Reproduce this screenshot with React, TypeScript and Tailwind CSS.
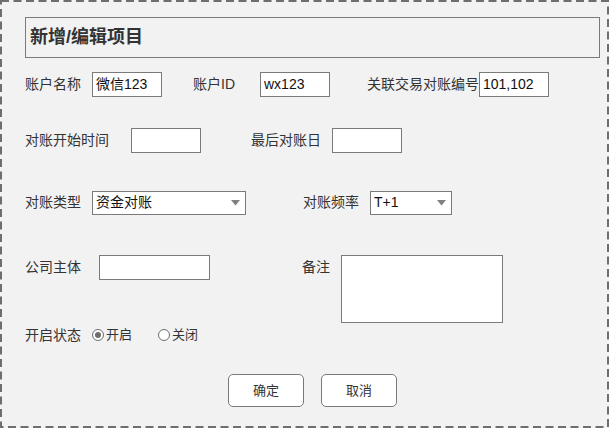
import React from "react";

const font = { fontFamily: "'Liberation Sans', 'Noto Sans CJK SC', sans-serif" };

function Box({ w, h = "h-[25px]", children }: { w: string; h?: string; children?: React.ReactNode }) {
  return (
    <div className={`${w} ${h} shrink-0 border border-[#7a7a7a] bg-white flex items-center pl-[3px] text-[14px] text-[#111]`}>
      {children}
    </div>
  );
}

function Label({ w, ml = "", children }: { w: string; ml?: string; children: React.ReactNode }) {
  return (
    <div className={`${w} ${ml} h-[25px] shrink-0 flex items-center text-[14px] text-[#333] whitespace-nowrap`}>
      {children}
    </div>
  );
}

function Select({ w, value }: { w: string; value: string }) {
  return (
    <div className={`${w} h-[24px] shrink-0 border border-[#7a7a7a] bg-white flex items-center justify-between pl-[3px] pr-[5px] text-[14px] text-[#111]`}>
      <span>{value}</span>
      <svg width="9" height="6" viewBox="0 0 9 6">
        <polygon points="0,0 9,0 4.5,5.5" fill="#808080" />
      </svg>
    </div>
  );
}

function Radio({ checked, label, ml = "" }: { checked?: boolean; label: string; ml?: string }) {
  return (
    <div className={`flex items-center ${ml} text-[13px] text-[#333]`}>
      <div className="w-[12px] h-[12px] rounded-full border border-[#6e6e6e] bg-white flex items-center justify-center mr-[2px]">
        {checked && <div className="w-[6px] h-[6px] rounded-full bg-[#6e6e6e]" />}
      </div>
      <span>{label}</span>
    </div>
  );
}

export default function App() {
  return (
    <div style={font} className="relative w-[609px] h-[428px] bg-[#f2f2f2] flex flex-col pl-[25px]">
      <svg className="absolute inset-0 pointer-events-none" width="609" height="428" viewBox="0 0 609 428">
        <rect x="1" y="1" width="607" height="426" fill="none" stroke="#6e6e6e" strokeWidth="2" strokeDasharray="8 4.5" />
      </svg>

      <div className="mt-[17px] w-[575px] h-[41px] border border-[#7a7a7a] flex items-center pl-[4px] text-[18px] font-bold text-[#333]">
        新增/编辑项目
      </div>

      <div className="mt-[14px] flex items-center">
        <Label w="w-[67px]">账户名称</Label>
        <Box w="w-[70px]">微信123</Box>
        <Label w="w-[67px]" ml="ml-[31px]">账户ID</Label>
        <Box w="w-[70px]">wx123</Box>
        <Label w="w-[112px]" ml="ml-[37px]">关联交易对账编号</Label>
        <Box w="w-[70px]">101,102</Box>
      </div>

      <div className="mt-[31px] flex items-center">
        <Label w="w-[106px]">对账开始时间</Label>
        <Box w="w-[70px]" />
        <Label w="w-[81px]" ml="ml-[50px]">最后对账日</Label>
        <Box w="w-[70px]" />
      </div>

      <div className="mt-[37px] flex items-center">
        <Label w="w-[67px]">对账类型</Label>
        <Select w="w-[154px]" value="资金对账" />
        <Label w="w-[67px]" ml="ml-[57px]">对账频率</Label>
        <Select w="w-[82px]" value="T+1" />
      </div>

      <div className="mt-[40px] flex items-start">
        <Label w="w-[74px]">公司主体</Label>
        <Box w="w-[111px]" />
        <Label w="w-[39px]" ml="ml-[92px]">备注</Label>
        <Box w="w-[162px]" h="h-[68px]" />
      </div>

      <div className="mt-[2px] h-[20px] flex items-center">
        <div className="w-[67px] shrink-0 text-[14px] text-[#333]">开启状态</div>
        <Radio checked label="开启" />
        <Radio label="关闭" ml="ml-[26px]" />
      </div>

      <div className="mt-[29px] flex items-center ml-[203px] gap-[17px]">
        <div className="w-[76px] h-[33px] border border-[#7a7a7a] rounded-[5px] bg-white flex items-center justify-center text-[13px] text-[#333]">确定</div>
        <div className="w-[76px] h-[33px] border border-[#7a7a7a] rounded-[5px] bg-white flex items-center justify-center text-[13px] text-[#333]">取消</div>
      </div>
    </div>
  );
}
